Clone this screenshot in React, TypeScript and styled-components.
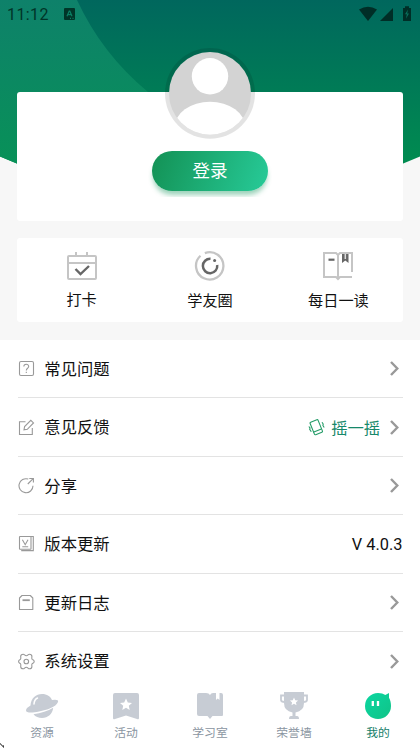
import React from 'react';
import styled, { createGlobalStyle } from 'styled-components';

const Global = createGlobalStyle`
  * { box-sizing: border-box; }
  html, body { margin: 0; padding: 0; background: #fff; }
  body { font-family: Roboto, "Noto Sans CJK SC", sans-serif; color: #111; overflow: hidden; }
  svg { display: block; flex: none; }
`;

const Screen = styled.div`
  width: 420px;
  height: 748px;
  display: flex;
  flex-direction: column;
  background: #fff;
  overflow: hidden;
  position: relative;
`;

const Top = styled.div`
  display: grid;
  height: 340px;
  flex: none;
  background: #f7f7f7;
  > * { grid-area: 1 / 1; }
`;

const TopContent = styled.div`
  display: flex;
  flex-direction: column;
  position: relative;
  padding: 0 17.4px;
`;

const StatusBar = styled.div`
  display: flex;
  align-items: center;
  height: 28px;
  margin: 0 -17.4px;
  padding: 0 7px;
  color: #003528;
  font-size: 16px;
  letter-spacing: 0.4px;
`;

const InputBadge = styled.svg`
  margin-left: 15.5px;
`;

const StatusIcons = styled.div`
  display: flex;
  margin-left: auto;
`;

const ProfileCard = styled.section`
  display: flex;
  flex-direction: column;
  align-items: center;
  height: 129px;
  margin-top: 64px;
  border-radius: 3px;
  background: #fff;
`;

const Avatar = styled.div`
  width: 90px;
  height: 91px;
  margin-top: -44px;
  flex: none;
`;

const LoginButton = styled.button`
  width: 116px;
  height: 40px;
  margin-top: 12px;
  padding: 0;
  border: 0;
  border-radius: 20px;
  flex: none;
  color: #fff;
  font: 17.5px/41px Roboto, "Noto Sans CJK SC", sans-serif;
  background: linear-gradient(110deg, #149458 5%, #26c895 95%);
  box-shadow: 0 5px 5px -1px rgba(20, 148, 90, 0.42);
  clip-path: inset(0 -4px -6px -4px);
`;

const Shortcuts = styled.section`
  display: grid;
  grid-template-columns: repeat(3, 1fr);
  height: 84px;
  margin-top: 17px;
  border-radius: 3px;
  background: #fff;
`;

const Shortcut = styled.div<{ $gap?: number }>`
  display: flex;
  flex-direction: column;
  align-items: center;
  padding-top: 12px;
  font-size: 15.2px;
  line-height: 20px;
  svg { margin-bottom: ${p => p.$gap ?? 9}px; }
`;

const Menu = styled.main`
  flex: 1;
  min-height: 0;
  padding: 0 17.5px;
  overflow: hidden;
`;

const Row = styled.div`
  display: flex;
  align-items: center;
  height: 58.4px;
  border-bottom: 1px solid #e3e3e3;
  font-size: 16.35px;
  &:last-child { border-bottom: 0; }
`;

const RowLabel = styled.span`
  margin-left: 9.8px;
  padding-bottom: 1.4px;
`;

const RowEnd = styled.span<{ $green?: boolean }>`
  display: flex;
  align-items: center;
  gap: 6px;
  margin-left: auto;
  color: ${p => (p.$green ? '#16886a' : '#111')};
`;

const Version = styled.span`
  padding-top: 2px;
`;

const Chevron = styled.svg`
  margin-left: 4px;
  margin-right: 3.3px;
`;

const TabBar = styled.nav`
  display: grid;
  grid-template-columns: repeat(5, 1fr);
  height: 62px;
  flex: none;
  background: #fff;
`;

const Tab = styled.div<{ $active?: boolean }>`
  display: flex;
  flex-direction: column;
  align-items: center;
  padding-top: 4px;
  font-size: 11.8px;
  line-height: 16px;
  color: ${p => (p.$active ? '#16806a' : '#8a95a1')};
  svg { margin-bottom: 3px; }
`;

const CornerMark = styled.svg`
  position: absolute;
  left: 0;
  bottom: 0;
`;

const Backdrop = () => (
  <svg width="420" height="180" viewBox="0 0 420 180">
    <defs>
      <linearGradient id="deep" x1="0" y1="0" x2="0" y2="1">
        <stop offset="0" stopColor="#00675d" />
        <stop offset="1" stopColor="#008c50" />
      </linearGradient>
      <linearGradient id="light" x1="0" y1="0" x2="0" y2="1">
        <stop offset="0" stopColor="#0e816a" />
        <stop offset="1" stopColor="#089158" />
      </linearGradient>
      <clipPath id="hill"><path d="M0 0H420V156.5L402 164Q210 205 18 164L0 156.5Z" /></clipPath>
    </defs>
    <g clipPath="url(#hill)">
      <path d="M0 0H420V165H0Z" fill="url(#deep)" />
      <path d="M0 0H77Q102 54 148 92Q190 125 240 165H0Z" fill="url(#light)" />
    </g>
  </svg>
);

const icons: Record<string, React.ReactNode> = {
  help: <><rect x="1.5" y="1.5" width="14" height="14" rx="1.5" /><path d="M5.8 6.6C5.8 3.5 10.8 3.5 10.7 6.5C10.6 8.4 8.3 8.2 8.3 10.5M8.3 11.8V13" /></>,
  edit: <><path d="M7.5 2.7H1.5V15.5H14.3V9" /><path d="M6 10.8L6.6 7.5L12.8 1.3L15.5 3.9L9.3 10.3Z" /></>,
  share: <><path d="M10.3 2.1A7 7 0 1 0 15 8.8" /><path d="M9.8 7L14.9 1.9M11.3 1.5H15.4V5.6" /></>,
  version: <><rect x="1.5" y="1.5" width="11.5" height="12.8" rx=".5" /><path d="M3.5 1.5H15.3V15.6H3.2M4.4 4.7L7.2 9.7L10 4.7M4.3 11.8H10.2" /></>,
  log: <><path d="M4 1.5H12.3L14.8 4V15.5H1.5V4Z" strokeLinejoin="round" /><path d="M4.5 6.2H11.8" strokeWidth="1.8" /></>,
  settings: <><path d="M8.3 2.7C10 2.7 10 1.2 11.4 1.2C12.6 1.2 13.9 2.2 13.9 3.5C13.9 4.8 13.4 5.5 14.2 6.3C15 7 16.2 7.1 16.2 8.5C16.2 9.9 15 10 14.2 10.7C13.4 11.5 13.9 12.2 13.9 13.5C13.9 14.8 12.6 15.8 11.4 15.8C10 15.8 10 14.3 8.3 14.3C6.6 14.3 6.6 15.8 5.2 15.8C4 15.8 2.7 14.8 2.7 13.5C2.7 12.2 3.2 11.5 2.4 10.7C1.6 10 .6 9.9 .6 8.5C.6 7.1 1.6 7 2.4 6.3C3.2 5.5 2.7 4.8 2.7 3.5C2.7 2.2 4 1.2 5.2 1.2C6.6 1.2 6.6 2.7 8.3 2.7Z" /><circle cx="8.3" cy="8.5" r="2.3" /></>,
};

const RowIcon = ({ name }: { name: string }) => (
  <svg width="17" height="17" viewBox="0 0 17 17" fill="none" stroke="#999" strokeWidth="1.1">{icons[name]}</svg>
);

const Arrow = () => (
  <Chevron width="9" height="15" viewBox="0 0 9 15" fill="none" stroke="#999" strokeWidth="2.4">
    <path d="M1 1L7.3 7.5L1 14" />
  </Chevron>
);

const Phone = () => (
  <svg width="17" height="17" viewBox="0 0 17 17" fill="none" stroke="#239b67" strokeWidth="1.1">
    <rect x="4" y="1.5" width="8.6" height="13.4" rx="1" transform="rotate(-22 8.4 8.3)" />
    <path d="M5.3 13.2L13.4 10M.8 7.5L2 8.8L1.7 10.3L3.3 12.7M14 3.2L15.2 5L14.9 6.5L16.2 8.5" />
  </svg>
);

const rows = [
  { icon: 'help', label: '常见问题' },
  { icon: 'edit', label: '意见反馈', shake: true },
  { icon: 'share', label: '分享' },
  { icon: 'version', label: '版本更新', value: 'V 4.0.3' },
  { icon: 'log', label: '更新日志' },
  { icon: 'settings', label: '系统设置' },
];

const STAR = 'M0 -6L1.8 -2L6 -1.6L2.8 1.3L3.7 5.6L0 3.3L-3.7 5.6L-2.8 1.3L-6 -1.6L-1.8 -2Z';

export default function App() {
  return (
    <Screen>
      <Global />
      <Top>
        <Backdrop />
        <TopContent>
          <StatusBar>
            <span>11:12</span>
            <InputBadge width="11" height="12" viewBox="0 0 11 12">
              <rect width="11" height="12" rx="1" fill="#003528" />
              <path d="M3 8.3L5.2 3H5.8L8 8.3M4 6.6H7M6 10.3H7M8.5 10.3H9.5" stroke="#0a8064" strokeWidth="1.2" fill="none" />
            </InputBadge>
            <StatusIcons>
              <svg width="54" height="16" viewBox="0 0 54 16" fill="#002e27">
                <path d="M0 3.5Q9 -1.8 18 3.5L9 15Z" />
                <path d="M34 2V15H21Z" />
                <path d="M44 2H46V.3H50V2H52V15H44Z" />
                <path d="M49 3.5L46 8.3H47.8L47 12.8L50 7.5H48.2Z" fill="#08705c" />
              </svg>
            </StatusIcons>
          </StatusBar>
          <ProfileCard>
            <Avatar>
              <svg width="90" height="91" viewBox="0 0 90 91">
                <defs><clipPath id="face"><ellipse cx="45" cy="45.4" rx="41" ry="41.3" /></clipPath></defs>
                <ellipse cx="45" cy="45.4" rx="45" ry="45.3" fill="#000" fillOpacity=".11" />
                <g clipPath="url(#face)">
                  <path d="M0 0H90V91H0Z" fill="#d3d3d3" />
                  <circle cx="45" cy="28.3" r="18.2" fill="#fff" />
                  <ellipse cx="45" cy="79.5" rx="35.5" ry="25.7" fill="#fff" />
                </g>
              </svg>
            </Avatar>
            <LoginButton>登录</LoginButton>
          </ProfileCard>
          <Shortcuts>
            <Shortcut $gap={8}>
              <svg width="32" height="32" viewBox="0 0 32 32" fill="none" stroke="#c5c5c5" strokeWidth="2">
                <rect x="2" y="6" width="28" height="23" rx="1" />
                <path d="M2 13H30M10 2V6M21 2V6" />
                <path d="M9.5 19L14.5 24L23 16" stroke="#666" strokeWidth="2.4" />
              </svg>
              打卡
            </Shortcut>
            <Shortcut>
              <svg width="32" height="32" viewBox="0 0 32 32" fill="none">
                <path d="M9.3 3.8A13.7 13.7 0 1 1 5.3 7" stroke="#c5c5c5" strokeWidth="2.3" transform="rotate(7 16 16)" />
                <path d="M16.5 8.8A7.2 7.2 0 1 0 23.2 15" stroke="#666" strokeWidth="2.5" />
                <circle cx="20.6" cy="10.4" r="1.5" fill="#666" />
              </svg>
              学友圈
            </Shortcut>
            <Shortcut>
              <svg width="32" height="32" viewBox="0 0 32 32" fill="none" stroke="#c5c5c5" strokeWidth="2">
                <path d="M30 22V3H18L16 5L14 3H2V27H14L16 29L18 27H30M16 5V28" />
                <path d="M6.5 9.7H12.5" stroke="#666" strokeWidth="2.2" />
                <path d="M20 4H26.5V13L23.3 10.5L20 13Z" fill="#666" stroke="none" />
                <path d="M23.3 4V9" stroke="#ddd" strokeWidth="1.5" />
              </svg>
              每日一读
            </Shortcut>
          </Shortcuts>
        </TopContent>
      </Top>
      <Menu>
        {rows.map(row => (
          <Row key={row.label}>
            <RowIcon name={row.icon} />
            <RowLabel>{row.label}</RowLabel>
            <RowEnd $green={row.shake}>
              {row.shake && <><Phone />摇一摇</>}
              {row.value ? <Version>{row.value}</Version> : <Arrow />}
            </RowEnd>
          </Row>
        ))}
      </Menu>
      <TabBar>
        <Tab>
          <svg width="34" height="32" viewBox="0 0 34 32" fill="#c7ccd4">
            <path d="M5.5 15.5C6 8 11 4 17 4C22 4 25.5 6.5 27 10Q34 9 33 12C31 17 22 20 14 21.5C7 23 1 23 1 20.5C1 18.5 3 17 5.5 15.5Z" />
            <path d="M8.5 24.2C16 23.3 23 21 28.2 17.8C27.5 24 23 28 17 28C13.5 28 10.5 26.7 8.5 24.2Z" />
            <path d="M9 14Q9.3 9.5 12.5 8" fill="none" stroke="#fff" strokeWidth="1.5" strokeLinecap="round" />
          </svg>
          资源
        </Tab>
        <Tab>
          <svg width="32" height="32" viewBox="0 0 32 32">
            <path d="M5 3H27Q29 3 29 5V28Q29 30 27 29L16 25.5L5 29Q3 30 3 28V5Q3 3 5 3Z" fill="#c7ccd4" />
            <path d={STAR} transform="translate(16 14.5)" fill="#fff" />
          </svg>
          活动
        </Tab>
        <Tab>
          <svg width="32" height="32" viewBox="0 0 32 32" fill="#c7ccd4">
            <path d="M5 3H12Q15 3 16 5Q17 3 19 3H22V10L23.7 8.6L25.5 10V3H27Q29 3 29 5V25Q29 26 28 26H18.5L16 29L13.5 26H5Q3 26 3 24V5Q3 3 5 3Z" />
          </svg>
          学习室
        </Tab>
        <Tab>
          <svg width="32" height="32" viewBox="0 0 32 32" fill="#c7ccd4">
            <path d="M6 2H26V13Q26 21 17.5 22.5V26H19Q21 26 21 29H11Q11 26 13 26H14.5V22.5Q6 21 6 13Z" />
            <path d="M7 5.5H3V10Q3 12 7 12M25 5.5H29V10Q29 12 25 12" fill="none" stroke="#c7ccd4" strokeWidth="1.8" />
            <path d={STAR} transform="translate(16 11.5) scale(.68)" fill="#fff" />
          </svg>
          荣誉墙
        </Tab>
        <Tab $active>
          <svg width="32" height="32" viewBox="0 0 32 32">
            <defs><linearGradient id="me" x1="0" y1="0" x2="1" y2="1"><stop stopColor="#0bd6a1" /><stop offset="1" stopColor="#10c387" /></linearGradient></defs>
            <path d="M16 3C19 3 21.5 3.8 23.3 5L27 3V7.8C28.3 10 29 13 29 16A13 13 0 1 1 16 3Z" fill="url(#me)" />
            <path d="M10.8 11V16M16 11V16" stroke="#fff" strokeWidth="2.3" />
          </svg>
          我的
        </Tab>
      </TabBar>
      <CornerMark width="5" height="5" viewBox="0 0 5 5"><path d="M0 1H1M1 2H2M2 3H4M3 4H4" stroke="#000" /></CornerMark>
    </Screen>
  );
}
